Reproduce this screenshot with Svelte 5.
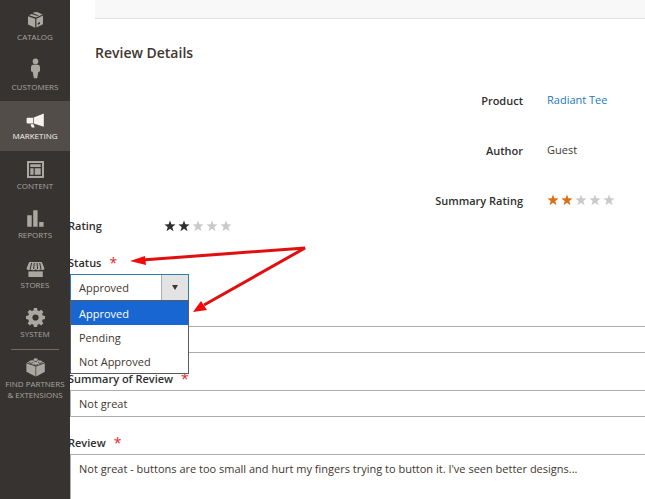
<script lang="ts">
	type MenuItem = { id: string, label: string };

	const menu: MenuItem[] = [
		{ id: "catalog", label: "Catalog" },
		{ id: "customers", label: "Customers" },
		{ id: "marketing", label: "Marketing" },
		{ id: "content", label: "Content" },
		{ id: "reports", label: "Reports" },
		{ id: "stores", label: "Stores" },
		{ id: "system", label: "System" }
	];

	const statuses = ["Approved", "Pending", "Not Approved"];
	const stars = [1, 2, 3, 4, 5];
	const summaryRating = 2;

	let active = $state("marketing");
	let status = $state("Approved");
	let open = $state(true);
	let rating = $state(2);
	let nickname = $state("");
	let summary = $state("Not great");
	let review = $state("Not great - buttons are too small and hurt my fingers trying to button it. I've seen better designs...");

	function choose(value: string)
	{
		status = value;
		open = false;
	}

	function toggle(e: MouseEvent)
	{
		e.preventDefault();
		open = !open;
	}
</script>

{#snippet star(filled: boolean)}
	<svg class="star" class:filled viewBox="0 0 12 12" aria-hidden="true"><path d="M6 .4 7.4 4.3 11.6 4.5 8.3 7.1 9.5 11.2 6 8.8 2.5 11.2 3.7 7.1.4 4.5 4.6 4.3Z" /></svg>
{/snippet}

{#snippet icon(id: string)}
	<svg class="icon" viewBox="0 0 20 20" aria-hidden="true">
		{#if id === "catalog"}
			<path d="M9.4 2.2 12 1.9 17.6 4.5 11 7.6 4.2 5.2 6.6 3.9 12.6 6 13.7 5.4 7.8 3Z" />
			<path d="M3 6.2 10.2 8.8V17.8L3 14.6Z" />
			<path d="M11.4 8.8 18 5.6V14.2L11.4 17.6ZM12.8 13.1V14.9L15 13.8V12Z" fill-rule="evenodd" />
		{:else if id === "customers"}
			<circle cx="10.5" cy="1.4" r="2.8" />
			<path d="M8.3 4.8H12.7C14.2 4.8 15 6.1 15 7.6V10.8L14 12.2 13.2 11.4V12.6L12.2 18.2H8.9L7.8 12.6V11.4L7 12.2 6 10.8V7.6C6 6.1 6.8 4.8 8.3 4.8Z" />
		{:else if id === "marketing"}
			<path d="M1.6 9.6 2.4 8.8H8V14.6H2.4L1.6 13.8Z" />
			<path d="M8.7 8.6 18.8 4.6V17.8L8.7 14.6Z" />
			<path d="M5.4 15.2H8.6L9.6 18.6H6.8Z" />
		{:else if id === "content"}
			<path d="M2 2H19V19H2ZM4 4V17H17V4Z" fill-rule="evenodd" />
			<path d="M5.3 5.3H15.7V8H5.3ZM5.3 9.2H8.6V15.7H5.3ZM9.8 9.2H15.7V15.7H9.8Z" />
		{:else if id === "reports"}
			<path d="M2.2 7.2H6.7V18.8H2.2ZM8.2 2.2H12.6V18.8H8.2ZM14.2 14H18.6V18.8H14.2Z" />
		{:else if id === "stores"}
			<path d="M4.2 4H16.8L19.4 10.2C19.4 12 17 12.6 15.8 11.2 14.4 12.6 11.9 12.6 10.7 11.2 9.2 12.6 6.8 12.6 5.4 11.2 4 12.6 1.6 12 1.6 10.2Z" />
			<path d="M3.4 13.4H17.8V19H3.4Z" />
			<path class="cut" d="M6.6 5 5.2 11M9.3 5 8.6 11M12 5 12.6 11M14.7 5 16 11" />
		{:else if id === "system"}
			<path d="M8.9 1H12.1L12.5 3.4 14.2 4.1 16.2 2.7 18.4 4.9 17 6.9 17.7 8.6 20 9V12.1L17.7 12.5 17 14.2 18.4 16.2 16.2 18.4 14.2 17 12.5 17.7 12.1 20H8.9L8.5 17.7 6.8 17 4.8 18.4 2.6 16.2 4 14.2 3.3 12.5 1 12.1V9L3.3 8.6 4 6.9 2.6 4.9 4.8 2.7 6.8 4.1 8.5 3.4ZM10.5 7.4A3.1 3.1 0 1 0 10.5 13.6 3.1 3.1 0 1 0 10.5 7.4Z" fill-rule="evenodd" />
		{:else}
			<path d="M1.4 6.2 10.5 9.6V19.4L1.4 14.8Z" />
			<path d="M11.2 9.6 19.8 6.2V14.8L11.2 19.4Z" />
			<path d="M1.8 5.4 10.6 2.2 19.4 5.4 10.8 8.8Z" />
			<path class="cut" d="M4.2 5.2C4.2 6.5 8 6.5 8 5.2M13.2 5.2C13.2 6.5 17 6.5 17 5.2M8.7 7.2C8.7 8.5 12.5 8.5 12.5 7.2M8.7 3.4C8.7 4.7 12.5 4.7 12.5 3.4" />
			<ellipse cx="6.1" cy="4.5" rx="2" ry="1.1" />
			<ellipse cx="15.1" cy="4.5" rx="2" ry="1.1" />
			<ellipse cx="10.6" cy="2.4" rx="2" ry="1.2" />
			<ellipse cx="10.6" cy="6.4" rx="2" ry="1.1" />
		{/if}
	</svg>
{/snippet}

<div class="page">
	<nav class="sidebar">
		<ul class="menu">
			{#each menu as item}
				<li class:active={active === item.id}>
					<a href="#{item.id}" onclick={() => active = item.id}>
						{@render icon(item.id)}
						<span>{item.label}</span>
					</a>
				</li>
			{/each}
		</ul>
		<hr />
		<a class="partners" href="#partners">
			{@render icon("partners")}
			<span>Find Partners<br />&amp; Extensions</span>
		</a>
	</nav>

	<main>
		<div class="toolbar"></div>
		<h1>Review Details</h1>

		<dl class="details">
			<dt>Product</dt>
			<dd><a href="#product">Radiant Tee</a></dd>
			<dt>Author</dt>
			<dd>Guest</dd>
			<dt>Summary Rating</dt>
			<dd class="stars summary">
				{#each stars as n}
					{@render star(n <= summaryRating)}
				{/each}
			</dd>
		</dl>

		<form>
			<fieldset class="rating">
				<legend>Rating</legend>
				<div class="stars">
					{#each stars as n}
						<label>
							<input type="radio" name="rating" value={n} aria-label="{n}" bind:group={rating} />
							{@render star(n <= rating)}
						</label>
					{/each}
				</div>
			</fieldset>

			<div class="field">
				<label class="required" for="status">Status</label>
				<div class="select">
					<select id="status" bind:value={status} onmousedown={toggle}>
						{#each statuses as s}
							<option>{s}</option>
						{/each}
					</select>
					<span class="caret"></span>
					{#if open}
						<ul class="options">
							{#each statuses as s}
								<li><button type="button" class:selected={s === status} onclick={() => choose(s)}>{s}</button></li>
							{/each}
						</ul>
					{/if}
				</div>
				<svg class="arrows" viewBox="0 0 180 74" aria-hidden="true">
					<path class="line" d="M12 15 175 3 74 60" />
					<path d="M0 16 15 11 16 20ZM63 67 71 56 77 65Z" />
				</svg>
			</div>

			<div class="field nickname">
				<input type="text" aria-label="Nickname" bind:value={nickname} />
			</div>

			<div class="field">
				<label class="required" for="summary">Summary of Review</label>
				<input id="summary" type="text" bind:value={summary} />
			</div>

			<div class="field">
				<label class="required" for="review">Review</label>
				<textarea id="review" bind:value={review}></textarea>
			</div>
		</form>
	</main>
</div>

<style>
	:global(body) {
		margin: 0;
		background: #fff;
	}

	.page {
		display: flex;
		height: 100vh;
		overflow: hidden;
		font: 11px/16px "Open Sans", "Noto Sans", sans-serif;
		color: #41362f;
	}

	ul {
		list-style: none;
		margin: 0;
		padding: 0;
	}

	.sidebar {
		flex: none;
		width: 70px;
		background: #373330;
		font-size: 8px;
		line-height: 11px;
		text-align: center;
		text-transform: uppercase;
	}

	.sidebar a {
		display: flex;
		flex-direction: column;
		align-items: center;
		gap: 1px;
		padding-top: 8px;
		color: #aaa6a0;
		text-decoration: none;
		white-space: nowrap;
	}

	.menu {
		display: grid;
		grid-auto-rows: 1fr;
		height: 347px;
		padding-top: 2px;
	}

	.active {
		background: #524d49;
	}

	.sidebar .active a {
		color: #f7f3eb;
	}

	.icon {
		width: 20px;
		height: 20px;
		fill: currentColor;
		overflow: visible;
	}

	.cut {
		fill: none;
		stroke: #373330;
	}

	hr {
		margin: 0 11px;
		border: 0;
		border-top: 1px solid #736963;
	}

	.sidebar .partners {
		padding-top: 7px;
	}

	main {
		flex: 1;
		min-width: 0;
	}

	.toolbar {
		height: 18px;
		margin-left: 25px;
		background: #f8f8f8;
		border-bottom: 1px solid #e3e3e3;
	}

	h1 {
		margin: 24px 0 30px 25px;
		font-size: 14px;
		line-height: 20px;
		font-weight: 600;
	}

	.details {
		display: grid;
		grid-template-columns: 1fr 98px;
		gap: 34px 24px;
		margin: 0;
	}

	dt, legend, .required {
		color: #303030;
		font-weight: 600;
	}

	dt {
		text-align: right;
	}

	dd {
		margin: -1px 0 1px;
	}

	dd a {
		color: #1979c3;
		text-decoration: none;
	}

	.stars {
		display: flex;
		align-items: center;
		gap: 2px;
	}

	.stars label {
		display: flex;
	}

	.stars input {
		position: absolute;
		opacity: 0;
		pointer-events: none;
	}

	.star {
		width: 12px;
		height: 12px;
		fill: #c9c9c9;
	}

	.filled {
		fill: #303030;
	}

	.summary .filled {
		fill: #dd6f15;
	}

	form {
		display: flex;
		flex-direction: column;
		gap: 18px;
		margin-top: 9px;
	}

	.rating {
		display: flex;
		border: 0;
		margin: 0 0 3px -2px;
		padding: 0;
	}

	legend {
		float: left;
		width: 96px;
		padding: 0;
	}

	.field {
		position: relative;
		display: flex;
		flex-direction: column;
		align-items: flex-start;
		gap: 3px;
	}

	.nickname {
		padding-top: 7px;
	}

	.required {
		display: flex;
		margin-left: -2px;
	}

	.required::after {
		content: "*";
		margin-left: 8px;
		color: #e22626;
		font-size: 14px;
		font-weight: 400;
	}

	.field input, textarea, select {
		box-sizing: border-box;
		width: 100%;
		height: 27px;
		margin: 0;
		padding: 0 8px;
		border: 1px solid #adadad;
		border-radius: 0;
		outline: 0;
		background: #fff;
		color: #41362f;
		font: inherit;
		appearance: none;
	}

	.field input, textarea {
		border-right: 0;
	}

	textarea {
		height: 80px;
		padding-top: 6px;
		resize: none;
	}

	.select {
		position: relative;
		z-index: 1;
		width: 119px;
	}

	select {
		display: block;
		border-color: #2a7fae;
	}

	.caret {
		position: absolute;
		top: 1px;
		right: 1px;
		bottom: 1px;
		width: 26px;
		display: grid;
		place-items: center;
		background: #e3e3e3;
		border-left: 1px solid #adadad;
		pointer-events: none;
	}

	.caret::after {
		content: "";
		border: 3px solid transparent;
		border-top: 5px solid #41362f;
		border-bottom: 0;
	}

	.options {
		position: absolute;
		top: 26px;
		left: 0;
		right: 0;
		border: 1px solid #5b5b5b;
		background: #fff;
	}

	.options button {
		display: block;
		width: 100%;
		height: 24px;
		padding: 2px 8px 0;
		border: 0;
		background: none;
		color: #41362f;
		font: inherit;
		text-align: left;
	}

	.options .selected {
		background: #1866d2;
		color: #fff;
	}

	/* callout arrows lie over the form */
	.arrows {
		position: absolute;
		top: -10px;
		left: 60px;
		z-index: 2;
		width: 180px;
		height: 74px;
		fill: #f50808;
		pointer-events: none;
	}

	.line {
		fill: none;
		stroke: #e01010;
		stroke-width: 3;
	}
</style>
